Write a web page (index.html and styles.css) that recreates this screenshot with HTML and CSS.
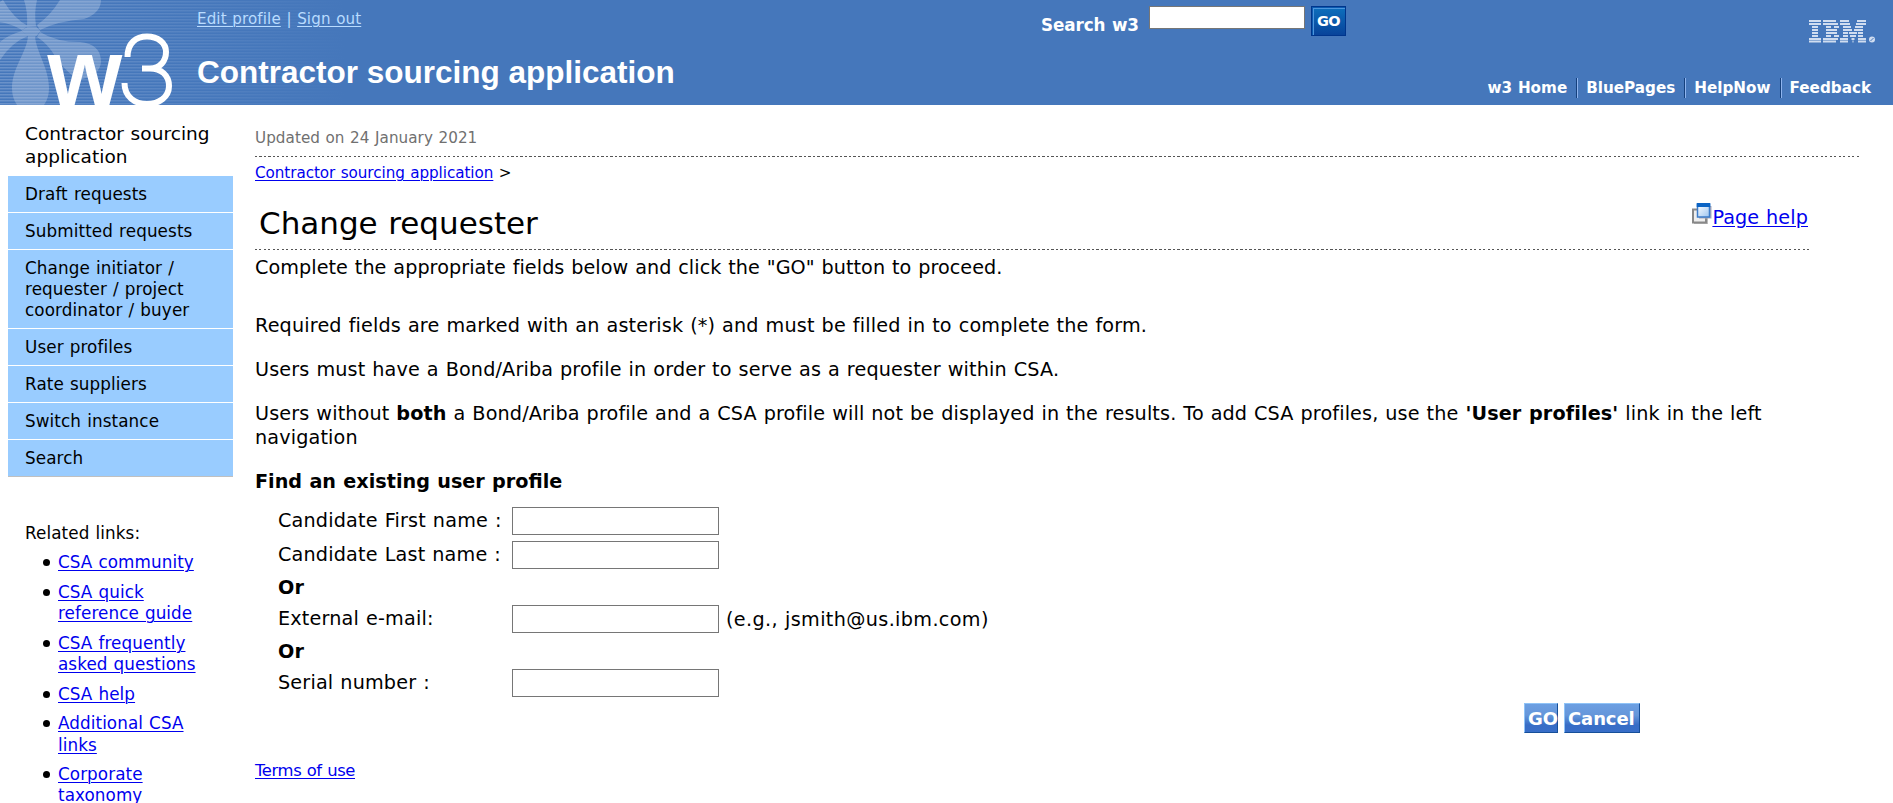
FILE: index.html
```html
<!DOCTYPE html>
<html lang="en">
<head>
<meta charset="utf-8">
<title>Change requester</title>
<link rel="stylesheet" href="styles.css">
</head>
<body>
<header class="masthead">
  <svg class="logo" width="198" height="105" viewBox="0 0 198 105" role="img" aria-label="w3">
    <g class="petals">
      <path d="M28 36C27 52 12 68 12 88Q12 98 17 105H44Q49 98 49 88C49 68 36 52 35 36Z"/>
      <path d="M24 0Q28 12 27 27L36 26Q34 12 37 0Z"/>
      <path d="M60 0Q50 16 37 25L40 30Q58 21 84 19Q101 13 101 0Z"/>
      <path d="M40 32Q56 42 80 42Q101 44 101 62Q100 76 78 80Q62 68 55 56Q48 44 37 37Z"/>
      <path d="M0 2L3 0Q14 19 28 26L22 30Q12 24 0 22Z"/>
      <path d="M22 31L28 36Q12 42 0 60V42Q8 35 22 31Z"/>
      <path d="M28 26.500H36L40.500 31 36 36.500H28L21.500 30.500Z"/>
    </g>
    <text class="logo-w" x="47.500" y="106">w</text>
    <path class="logo-ring" d="M127.500 57C127.500 43 136 36.500 147 36.500S166 43 166 52 160 68.500 150 68.500H142M150 68.500C161 68.500 169 75 169 86S159 104 147 104 124.500 97 124.500 83"/>
  </svg>
  <div class="brand">
    <div class="session"><a href="#">Edit profile</a> <span>|</span> <a href="#">Sign out</a></div>
    <div class="app-title">Contractor sourcing application</div>
  </div>
  <form class="search">
    <label for="q">Search w3</label>
    <input id="q" type="text">
    <button type="button" class="search-go">GO</button>
  </form>
  <div class="corner">
    <svg class="ibm" width="68" height="23" viewBox="0 0 68 23" role="img" aria-label="IBM">
      <path d="M0 1H12M14 1H27M31 1H40M48 1H57M0 4H12M14 4H29M31 4H41M47 4H57M3 7H9M17 7H22M25 7H30M34 7H42M46 7H54M3 10H9M17 10H28M34 10H43M45 10H54M3 13H9M17 13H28M34 13H39M40 13H48M49 13H54M3 16H9M17 16H22M25 16H30M34 16H39M41 16H47M49 16H54M0 19H12M14 19H29M31 19H39M42.500 19H45.500M49 19H57M0 21.500H12M14 21.500H27M31 21.500H39M43.500 21.500H44.500M49 21.500H57"/>
      <circle cx="63" cy="19.500" r="3"/>
      <path class="dot-cut" d="M61.500 21L64.500 18"/>
    </svg>
    <nav class="top-nav">
      <a href="#">w3 Home</a><a href="#">BluePages</a><a href="#">HelpNow</a><a href="#">Feedback</a>
    </nav>
  </div>
</header>
<div class="page">
  <aside class="side">
    <div class="side-title">Contractor sourcing application</div>
    <ul class="menu">
      <li>Draft requests</li>
      <li>Submitted requests</li>
      <li>Change initiator /<br>requester / project<br>coordinator / buyer</li>
      <li>User profiles</li>
      <li>Rate suppliers</li>
      <li>Switch instance</li>
      <li>Search</li>
    </ul>
    <div class="related">Related links:</div>
    <ul class="links">
      <li><a href="#">CSA community</a></li>
      <li><a href="#">CSA quick<br>reference guide</a></li>
      <li><a href="#">CSA frequently<br>asked questions</a></li>
      <li><a href="#">CSA help</a></li>
      <li><a href="#">Additional CSA<br>links</a></li>
      <li><a href="#">Corporate<br>taxonomy</a></li>
    </ul>
  </aside>
  <main class="main">
    <div class="updated">Updated on 24 January 2021</div>
    <div class="rule"></div>
    <div class="crumb"><a href="#">Contractor sourcing application</a> &gt;</div>
    <div class="content">
      <div class="heading">
        <h1>Change requester</h1>
        <a class="help" href="#"><svg width="20" height="22" viewBox="0 0 20 22"><defs><linearGradient id="pane" x1="0" y1="0" x2="1" y2="1"><stop offset="0" stop-color="#fff"/><stop offset="1" stop-color="#9cc4f0"/></linearGradient></defs><path d="M2 7H16V21H2Z" fill="#bbb"/><path d="M1 6.500H14V19.500H1Z" fill="#eee" stroke="#888" stroke-width="2"/><path d="M7 3H19.500V15.500H7Z" fill="#aab"/><path d="M5.500 1.500H17.500V14H5.500Z" fill="url(#pane)" stroke="#3d7cc9" stroke-width="1.500"/><path d="M4.700 0H18.300V4H4.700Z" fill="#0a63c4"/></svg><span>Page help</span></a>
      </div>
      <div class="rule"></div>
      <p class="intro">Complete the appropriate fields below and click the "GO" button to proceed.</p>
      <p class="t2">Required fields are marked with an asterisk (*) and must be filled in to complete the form.</p>
      <p class="t3">Users must have a Bond/Ariba profile in order to serve as a requester within CSA.</p>
      <p class="t4">Users without <b>both</b> a Bond/Ariba profile and a CSA profile will not be displayed in the results. To add CSA profiles, use the <b>'User profiles'</b> link in the left<br>navigation</p>
      <p class="find"><b>Find an existing user profile</b></p>
      <form class="fields">
        <div class="row"><label for="f1">Candidate First name :</label><input id="f1" type="text"></div>
        <div class="row"><label for="f2">Candidate Last name :</label><input id="f2" type="text"></div>
        <div class="or">Or</div>
        <div class="row"><label for="f3">External e-mail:</label><input id="f3" type="text"><span class="hint">(e.g., jsmith@us.ibm.com)</span></div>
        <div class="or">Or</div>
        <div class="row"><label for="f4">Serial number :</label><input id="f4" type="text"></div>
      </form>
      <div class="actions"><button type="button" class="go">GO</button><button type="button" class="cancel">Cancel</button></div>
      <a class="terms" href="#">Terms of use</a>
    </div>
  </main>
</div>
</body>
</html>
```
FILE: styles.css
```css
* { box-sizing: border-box; }
body {
  margin: 0;
  height: 803px;
  overflow: hidden;
  background: #fff;
  color: #000;
  font-family: Verdana, "DejaVu Sans", sans-serif;
  font-size: 19.2px;
  line-height: 24px;
  word-spacing: 0.034em;
}
a { color: #0000ee; text-underline-offset: 2px; text-decoration-thickness: 1px; }
ul { list-style: none; margin: 0; padding: 0; }
p, h1 { margin: 0; }

.masthead {
  display: flex;
  height: 105px;
  background:
    linear-gradient(to right, rgba(69,119,187,0) 0, #4577bb 345px),
    repeating-linear-gradient(to bottom, #4577bb 0 1px, #6a92ca 1px 2px, #5784c2 2px 3px);
  color: #fff;
}
.logo { flex: none; display: block; overflow: visible; }
.petals { fill: #fff; opacity: 0.22; }
.logo-w { font: bold 96px "Liberation Sans", Arial, sans-serif; fill: #fff; }
.logo-ring { fill: none; stroke: #fff; stroke-width: 6; }
.brand { width: 844px; margin-left: -1px; }
.session { font-size: 15.1px; line-height: 20px; padding-top: 9px; letter-spacing: 0.12px; color: #b9dcff; white-space: nowrap; }
.session a { color: #b9dcff; }
.app-title {
  margin-top: 24px;
  font: bold 31.5px/38px "Liberation Sans", Arial, sans-serif;
  word-spacing: 0;
  white-space: nowrap;
}
.search { display: flex; align-items: flex-start; width: 400px; padding-top: 6px; }
.search label { width: 108px; padding-top: 8px; font-size: 16.8px; line-height: 22px; font-weight: bold; letter-spacing: -0.08px; white-space: nowrap; }
.search input { width: 156px; height: 23px; border: 1px solid #767676; background: #fff; padding: 0; margin-right: 6px; }
.search-go {
  width: 35px; height: 30px; padding: 0;
  border: 1px solid #00358c;
  box-shadow: inset 1px 1px 0 #0b5bb0, inset 2px 2px 0 #4d95dd;
  background: linear-gradient(#0d70bd, #08439a);
  color: #fff;
  font: bold 14.5px "DejaVu Sans", sans-serif;
  letter-spacing: -0.7px;
}
.corner { flex: 1; display: flex; flex-direction: column; align-items: flex-end; padding: 20px 22px 0 0; }
.ibm { stroke: #d0ddf0; stroke-width: 1.8; fill: #d0ddf0; margin-right: -6px; }
.ibm circle { stroke: none; }
.dot-cut { stroke: #4577bb; stroke-width: 1; }
.top-nav { display: flex; margin-top: 35px; font-size: 15.2px; line-height: 20px; font-weight: bold; }
.top-nav a { color: #fff; text-decoration: none; white-space: nowrap; padding-left: 8px; margin-left: 10px; border-left: 1px solid #8fb4ee; box-shadow: -1px 0 0 #15407c; }
.top-nav a:first-child { border: 0; box-shadow: none; }

.page { display: flex; height: 698px; }
.side { flex: none; width: 255px; padding: 17px 22px 0 8px; }
.side-title { width: 200px; margin-left: 17px; height: 54px; font-size: 18.5px; line-height: 23px; letter-spacing: 0.05px; }
.menu { background: #99ccff; border-bottom: 1px solid #c0c0c0; font-size: 16.8px; line-height: 21px; letter-spacing: 0.1px; }
.menu li { padding: 8px 0 7px 17px; border-bottom: 1px solid #fff; }
.menu li:last-child { border: 0; }
.related { margin: 46px 0 8px 17px; font-size: 16.8px; line-height: 21.25px; letter-spacing: 0.1px; }
.links { margin-left: 50px; font-size: 16.8px; line-height: 21.25px; letter-spacing: 0.08px; }
.links li { position: relative; margin-bottom: 8.4px; white-space: nowrap; }
.links li::before { content: ""; position: absolute; left: -15px; top: 7px; width: 7px; height: 7px; border-radius: 50%; background: #000; }

.main { width: 1604px; padding-top: 23px; }
.updated { font-size: 15.2px; line-height: 20px; letter-spacing: 0.05px; color: #707070; padding-bottom: 8px; }
.rule { height: 1px; background: repeating-linear-gradient(to right, #555 0 2px, #fff 2px 4.500px); }
.crumb { font-size: 15.2px; line-height: 20px; padding-top: 6px; letter-spacing: -0.06px; }
.content { width: 1555px; }
.heading { display: flex; justify-content: space-between; height: 66px; padding: 20px 2px 0 4px; }
h1 { font-size: 31px; line-height: 40px; font-weight: normal; }
.help { display: flex; align-items: flex-start; text-decoration: none; letter-spacing: 0.1px; }
.help span { text-decoration: underline; padding-top: 3px; }
.intro { padding-top: 6px; letter-spacing: 0.065px; }
.t2 { margin-top: 34px; letter-spacing: 0.165px; }
.t3, .t4, .find { margin-top: 20px; }
.t3 { letter-spacing: 0.15px; }
.t4 { white-space: nowrap; letter-spacing: 0.14px; }
.find { height: 37px; }
.fields { padding-left: 23px; letter-spacing: 0.18px; }
.row { display: flex; height: 34px; }
.row label { width: 234px; padding-top: 2px; white-space: nowrap; }
.row input { width: 207px; height: 28px; border: 1px solid #767676; padding: 0; }
.hint { margin-left: 7px; padding-top: 3px; letter-spacing: 0.36px; }
.or { height: 30px; padding-top: 1px; font-weight: bold; }
.actions { display: flex; gap: 6px; margin-left: 1269px; }
.actions button {
  height: 30px; padding: 0 3px;
  border: 1px solid; border-color: #8fc3f7 #164f99 #164f99 #8fc3f7;
  background: linear-gradient(#6c9fe2 0, #6596da 40%, #376dc6 75%, #386ec8);
  color: #fff;
  font: bold 18px "DejaVu Sans", sans-serif;
  letter-spacing: -0.1px;
  text-align: left;
}
.actions .go { width: 34px; }
.actions .cancel { width: 76px; }
.terms { display: inline-block; font-size: 16.4px; margin-top: 26px; letter-spacing: -0.4px; }
```
